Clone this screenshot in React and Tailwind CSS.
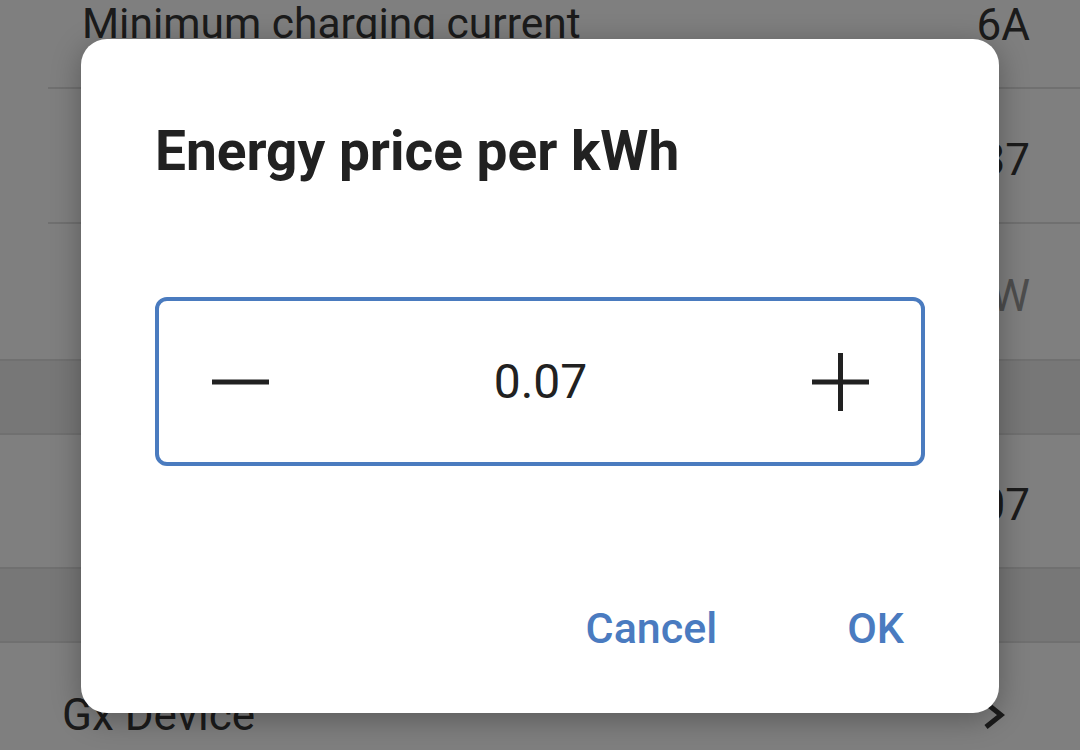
import React from 'react';

const font = { fontFamily: 'Roboto, "Noto Sans", sans-serif' };

const SettingRow = ({ label, value, indent = false, muted = false, height = 'h-[135px]', divider = true }) => (
  <div className={`${height} ${indent ? 'pl-[48px]' : ''}`}>
    <div
      className={`flex h-full items-center justify-between pt-2 ${divider ? 'border-b-2 border-[#e1e1e1]' : ''} ${indent ? 'pl-[34px]' : 'pl-[62px]'} pr-[50px]`}
    >
      <span className="text-[42.5px] leading-none text-[#363636]">{label}</span>
      <span className={`text-[44px] leading-none ${muted ? 'text-[#9a9a9a]' : 'text-[#363636]'}`}>{value}</span>
    </div>
  </div>
);

const SectionBand = () => <div className="h-[76px] border-y-2 border-[#e1e1e1] bg-[#efefef]" />;

const Stepper = () => (
  <div className="mx-[74px] flex h-[169px] items-center justify-between rounded-[12px] border-4 border-[#4a7bbf] pl-[53px] pr-[52px]">
    <svg width="57" height="58" viewBox="0 0 57 58">
      <line x1="0" y1="29" x2="57" y2="29" stroke="#212121" strokeWidth="5" />
    </svg>
    <span className="text-[48px] leading-none text-[#212121]">0.07</span>
    <svg width="57" height="58" viewBox="0 0 57 58">
      <line x1="0" y1="29" x2="57" y2="29" stroke="#212121" strokeWidth="5" />
      <line x1="28.5" y1="0" x2="28.5" y2="58" stroke="#212121" strokeWidth="5" />
    </svg>
  </div>
);

export default function App() {
  return (
    <div className="relative h-[750px] w-[1080px] overflow-hidden bg-white" style={font}>
      {/* settings list underneath */}
      <div className="-mt-[46px]">
        <SettingRow label="Minimum charging current" value="6A" indent />
        <SettingRow value="0.37" indent />
        <SettingRow value="0 W" muted divider={false} />
        <SectionBand />
        <SettingRow value="0.07" height="h-[132px]" divider={false} />
        <SectionBand />
        <div className="flex h-[135px] items-center justify-between pl-[62px] pr-[75px] pt-2">
          <span className="text-[44px] leading-none text-[#363636]">Gx Device</span>
          <svg width="22" height="28" viewBox="0 0 22 28">
            <path d="M3 2 L18 14 L3 26" fill="none" stroke="#363636" strokeWidth="5" />
          </svg>
        </div>
      </div>

      {/* scrim */}
      <div className="absolute inset-0 bg-black/50" />

      {/* dialog */}
      <div className="absolute left-[81px] top-[39px] flex h-[674px] w-[918px] flex-col rounded-[26px] bg-white shadow-[0_6px_30px_rgba(0,0,0,0.3)]">
        <h2 className="pl-[74px] pt-[85px] text-[55px] font-bold leading-none text-[#212121]">Energy price per kWh</h2>
        <div className="mt-[118px]">
          <Stepper />
        </div>
        <div className="mt-auto flex justify-end gap-[130px] pb-[63px] pr-[95px]">
          <button className="text-[43px] font-medium leading-none text-[#4a7bc0]">Cancel</button>
          <button className="text-[43px] font-medium leading-none text-[#4a7bc0]">OK</button>
        </div>
      </div>
    </div>
  );
}
